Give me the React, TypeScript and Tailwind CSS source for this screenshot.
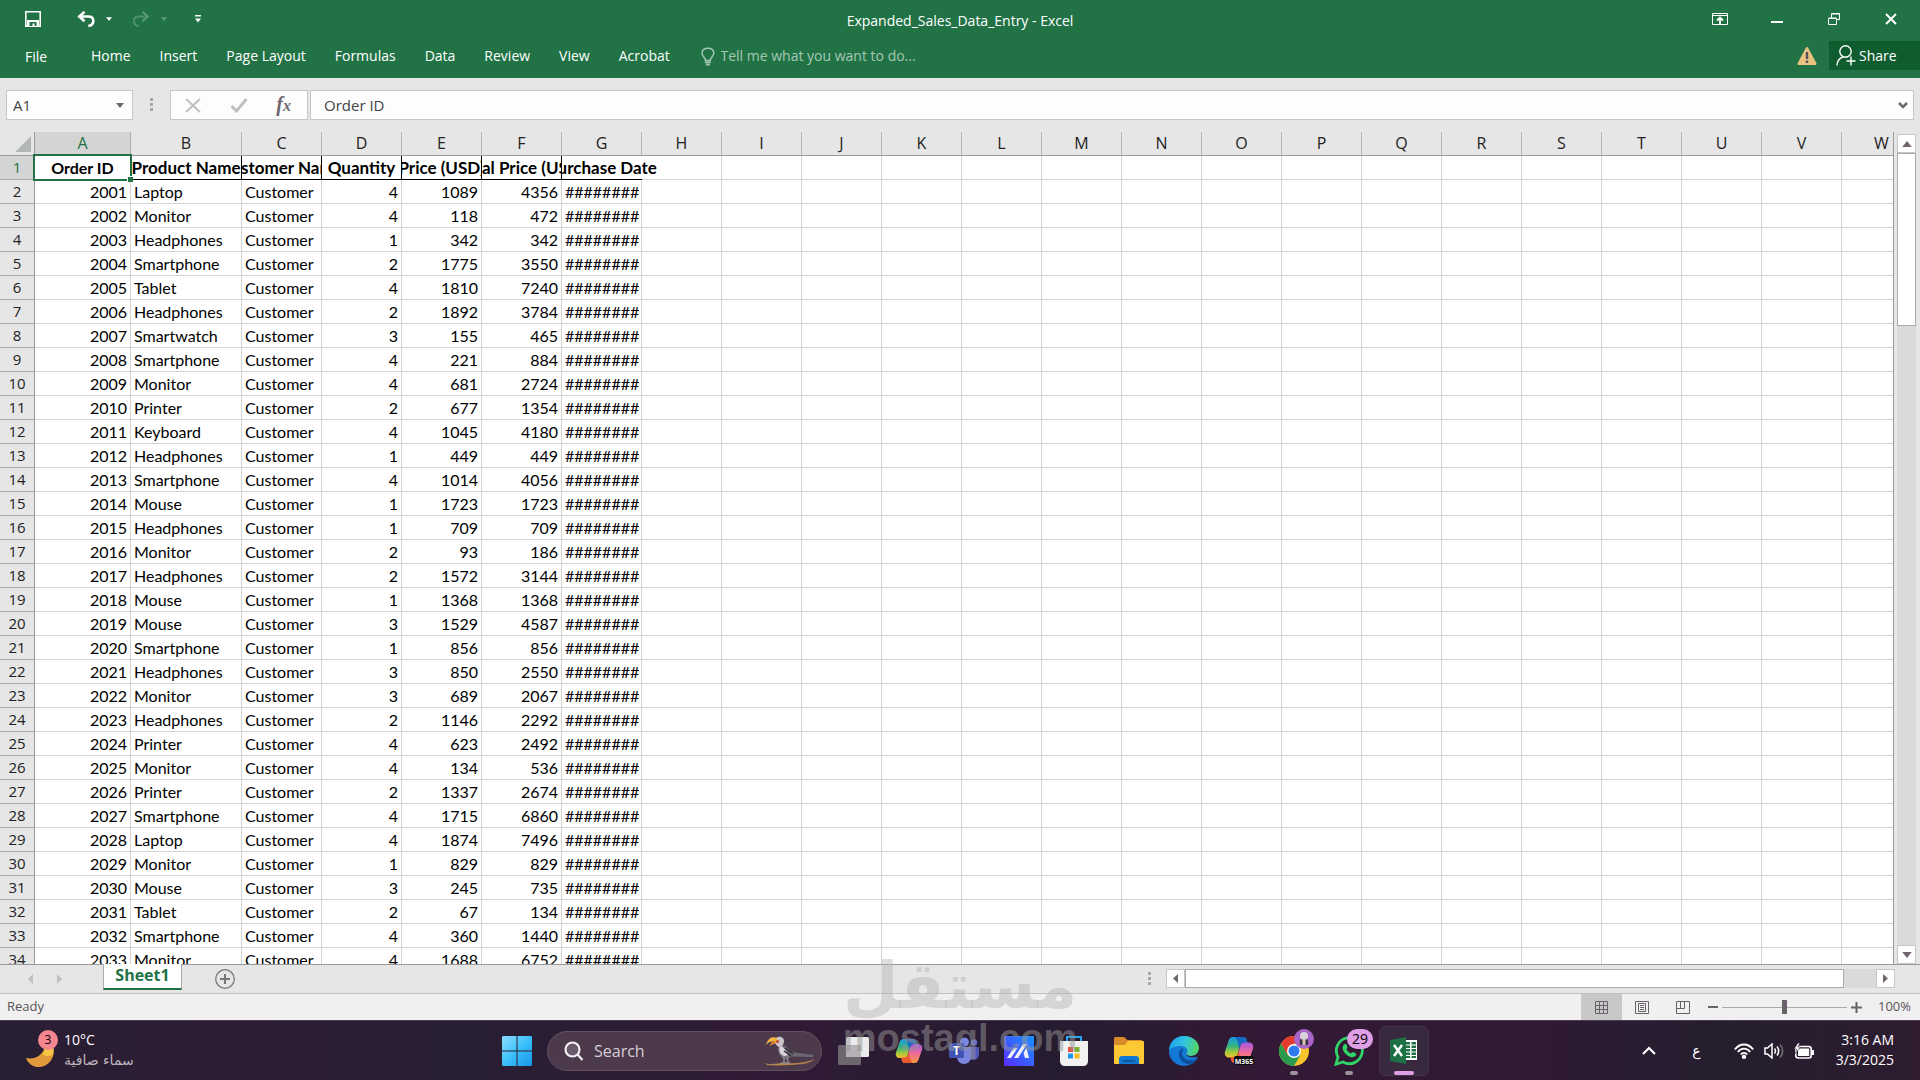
import type { ReactNode } from 'react'

const rows: [string, number, number, number][] = [
    ['Laptop', 4, 1089, 4356],
    ['Monitor', 4, 118, 472],
    ['Headphones', 1, 342, 342],
    ['Smartphone', 2, 1775, 3550],
    ['Tablet', 4, 1810, 7240],
    ['Headphones', 2, 1892, 3784],
    ['Smartwatch', 3, 155, 465],
    ['Smartphone', 4, 221, 884],
    ['Monitor', 4, 681, 2724],
    ['Printer', 2, 677, 1354],
    ['Keyboard', 4, 1045, 4180],
    ['Headphones', 1, 449, 449],
    ['Smartphone', 4, 1014, 4056],
    ['Mouse', 1, 1723, 1723],
    ['Headphones', 1, 709, 709],
    ['Monitor', 2, 93, 186],
    ['Headphones', 2, 1572, 3144],
    ['Mouse', 1, 1368, 1368],
    ['Mouse', 3, 1529, 4587],
    ['Smartphone', 1, 856, 856],
    ['Headphones', 3, 850, 2550],
    ['Monitor', 3, 689, 2067],
    ['Headphones', 2, 1146, 2292],
    ['Printer', 4, 623, 2492],
    ['Monitor', 4, 134, 536],
    ['Printer', 2, 1337, 2674],
    ['Smartphone', 4, 1715, 6860],
    ['Laptop', 4, 1874, 7496],
    ['Monitor', 1, 829, 829],
    ['Mouse', 3, 245, 735],
    ['Tablet', 2, 67, 134],
    ['Smartphone', 4, 360, 1440],
    ['Monitor', 4, 1688, 6752],
]

const letters = 'ABCDEFGHIJKLMNOPQRSTUVW'.split('')
const emptyColumns = letters.slice(7)
const headings = ['Product Name', 'Customer Name', 'Quantity', 'Price (USD)', 'Total Price (USD)']
const tabs = ['Home', 'Insert', 'Page Layout', 'Formulas', 'Data', 'Review', 'View', 'Acrobat']

function Caret({ className }: { className: string }) {
    return (
        <svg viewBox="0 0 8 5" className={className} fill="currentColor" aria-hidden="true">
            <path d="M0 0h8L4 5z" />
        </svg>
    )
}

function TitleBar() {
    return (
        <div className="grid h-[38px] grid-cols-[1fr_auto_1fr] items-center text-white">
            <div className="flex items-center pl-[25px]">
                <button aria-label="Save" className="mr-9">
                    <svg width="16" height="16" viewBox="0 0 16 16">
                        <path d="M.8.8h14.4v14.4H.8z" fill="none" stroke="#fff" strokeWidth="1.6" />
                        <path d="M2 9h12v6H2z" fill="#fff" />
                        <path d="M4.500 11h7v4h-2v-2.500h-2V15h-3z" fill="#217346" />
                    </svg>
                </button>
                <button aria-label="Undo">
                    <svg width="18" height="16" viewBox="0 0 18 16" fill="none" stroke="#fff">
                        <path d="M3 5.500h8.500c3 0 4.800 1.900 4.800 4.500 0 2.700-2 4.500-5 5" strokeWidth="2.600" />
                        <path d="M7.500.8 2.300 5.500l5.200 4.700" strokeWidth="2.600" />
                    </svg>
                </button>
                <Caret className="ml-[11px] h-1 w-1.5" />
                <button aria-label="Redo" className="ml-5 text-[#5c9a78]">
                    <svg width="18" height="16" viewBox="0 0 18 16" fill="none" stroke="currentColor">
                        <path d="M15 5.500H7C4 5.500 1.800 7.400 1.800 10c0 2.700 2 4.500 5 5" strokeWidth="2" strokeDasharray="2 .6" />
                        <path d="m10.500.8 5.200 4.700-5.200 4.700" strokeWidth="2" />
                    </svg>
                </button>
                <Caret className="ml-[11px] h-1 w-1.5 text-[#5c9a78]" />
                <button aria-label="Customize Quick Access Toolbar" className="ml-7">
                    <svg width="6" height="8" viewBox="0 0 6 8" fill="#fff">
                        <path d="M0 0h6v1.500H0zM0 3.500h6L3 7.500z" />
                    </svg>
                </button>
            </div>
            <h1 className="pt-1 text-sm">Expanded_Sales_Data_Entry - Excel</h1>
            <div className="flex justify-end pr-px">
                <button aria-label="Ribbon Display Options" className="flex w-[57px] justify-center">
                    <svg width="16" height="12" viewBox="0 0 16 12" fill="none" stroke="#fff">
                        <path d="M.5.5h15v11H.5zM.5 2.500h15" />
                        <path d="M8 11V5.500M5 7.500l3-3 3 3" strokeWidth="1.800" />
                    </svg>
                </button>
                <button aria-label="Minimize" className="flex w-[57px] items-center justify-center">
                    <svg width="12" height="12" viewBox="0 0 12 12"><path d="M0 8h12v2H0z" fill="#fff" /></svg>
                </button>
                <button aria-label="Restore Down" className="flex w-[57px] justify-center">
                    <svg width="12" height="12" viewBox="0 0 12 12" fill="none" stroke="#fff">
                        <path d="M.5 5.500h8v6h-8zM.5 5h8M3.500 5V.5h8v6h-3M3.500 1h8" />
                    </svg>
                </button>
                <button aria-label="Close" className="flex w-[57px] justify-center">
                    <svg width="12" height="12" viewBox="0 0 12 12"><path d="m1 1 10 10M11 1 1 11" stroke="#fff" strokeWidth="2" /></svg>
                </button>
            </div>
        </div>
    )
}

function Ribbon() {
    return (
        <div className="flex h-10 items-start text-sm text-white">
            <button className="mr-[29px] mt-1 h-[30px] w-12 pl-6">File</button>
            <nav className="flex">
                {tabs.map((tab) => (
                    <button key={tab} className="h-9 pl-3.5 pr-[15px]">{tab}</button>
                ))}
            </nav>
            <label className="ml-4 flex h-9 flex-1 items-center gap-1.5 text-[#a6c7b5]">
                <svg width="14" height="19" viewBox="0 0 14 19" fill="none" stroke="currentColor" strokeWidth="1.500">
                    <path d="M4.500 13.500c0-3-3.500-4-3.500-7.300C1 3 3.500 1 7 1s6 2 6 5.200c0 3.300-3.500 4.300-3.500 7.300z" />
                    <path d="M4 15.500h6M5 17.800h4" strokeWidth="1.800" />
                </svg>
                <input className="w-full bg-transparent outline-none placeholder:text-[#a6c7b5]" placeholder="Tell me what you want to do..." aria-label="Tell me what you want to do" />
            </label>
            <svg width="20" height="18" viewBox="0 0 20 18" className="mr-3 mt-[9px]">
                <path d="M10 0c.6 0 1 .4 1.300.9l8 15c.5 1-.1 2.100-1.200 2.100H1.900C.8 18 .2 16.900.7 15.900l8-15C9 .4 9.400 0 10 0z" fill="#e8c280" />
                <path d="M8.800 5h2.400v7H8.800zM8.800 13.500h2.400V16H8.800z" fill="#5d4f5c" />
            </svg>
            <button className="mt-[3px] flex h-[29px] w-[91px] items-center gap-[3px] bg-[#0f5c2f] pl-[7px]">
                <svg width="20" height="21" viewBox="0 0 20 21" fill="none" stroke="#fff" strokeWidth="1.400">
                    <circle cx="9.500" cy="6.500" r="5.700" />
                    <path d="M1 20.500c.3-4.800 2.500-7.500 6-8.500M15 11.500v9M10.500 16h9" />
                </svg>
                Share
            </button>
        </div>
    )
}

function FormulaBar() {
    return (
        <div className="flex h-[54px] items-start px-1.5 pt-3 text-[15px] text-[#444]">
            <div className="flex h-[30px] w-[127px] items-center border border-[#c6c6c6] bg-[#fdfdfd] pl-1.5 pr-2">
                <input className="w-full min-w-0 bg-transparent outline-none" aria-label="Name Box" defaultValue="A1" />
                <Caret className="h-[5px] w-2 shrink-0 text-[#6f6670]" />
            </div>
            <svg width="3" height="13" viewBox="0 0 3 13" fill="#a6a6a6" className="mx-[17px] mt-2">
                <path d="M0 0h3v3H0zM0 5h3v3H0zM0 10h3v3H0z" />
            </svg>
            <div className="flex h-[30px] w-[138px] items-center justify-between border border-[#c6c6c6] bg-[#fdfdfd] pl-3.5 pr-4">
                <button aria-label="Cancel">
                    <svg width="16" height="15" viewBox="0 0 16 15"><path d="m1 1 14 13M15 1 1 14" stroke="#c0c0c0" strokeWidth="2" /></svg>
                </button>
                <button aria-label="Enter">
                    <svg width="18" height="15" viewBox="0 0 18 15"><path d="m1.500 8 5 5L16.500 1" fill="none" stroke="#c0c0c0" strokeWidth="3" /></svg>
                </button>
                <button aria-label="Insert Function" className="font-['Liberation_Serif',serif] text-xl font-bold italic leading-6 text-[#6f6670]">
                    f<span className="text-base">x</span>
                </button>
            </div>
            <div className="ml-0.5 flex h-[30px] flex-1 items-center border border-[#c6c6c6] bg-[#fdfdfd] pl-[13px] pr-[5px]">
                <input className="w-full bg-transparent outline-none" aria-label="Formula Bar" defaultValue="Order ID" />
                <button aria-label="Expand Formula Bar">
                    <svg width="10" height="7" viewBox="0 0 10 7"><path d="m1 1 4 4 4-4" fill="none" stroke="#6f6670" strokeWidth="2.500" /></svg>
                </button>
            </div>
        </div>
    )
}

function Cell({ children, right }: { children?: ReactNode; right?: boolean }) {
    return (
        <td className={right ? 'overflow-hidden border-b border-r border-[#d4d4d4] px-[3px] text-right' : 'overflow-hidden border-b border-r border-[#d4d4d4] px-[3px]'}>
            {children}
        </td>
    )
}

function RowHeader({ n }: { n: number }) {
    return (
        <th scope="row" className={n === 1
            ? "border-b border-r border-b-[#ababab] border-r-[#999] bg-[#d3d5d4] font-['Open_Sans',sans-serif] text-[15px] font-normal text-[#217346]"
            : "border-b border-r border-b-[#ababab] border-r-[#999] bg-[#e6e6e6] font-['Open_Sans',sans-serif] text-[15px] font-normal text-[#222]"}
        >
            {n}
        </th>
    )
}

function Sheet() {
    return (
        <div className="min-w-0 flex-1 overflow-hidden border-r border-[#999]">
            <table className="w-px table-fixed border-separate border-spacing-0 whitespace-nowrap bg-white font-[Lato,sans-serif] text-base leading-[23px] text-black [&_td]:h-6 [&_td]:py-0 [&_th]:h-6 [&_th]:p-0">
                <colgroup>
                    <col className="w-[35px]" />
                    <col className="w-24" />
                    <col className="w-[111px]" />
                    {letters.slice(2).map((l) => <col key={l} className="w-20" />)}
                </colgroup>
                <thead>
                    <tr className="bg-[#e6e6e6]">
                        <td className="border-b border-r border-[#999] pr-[3px]">
                            <svg width="16" height="16" viewBox="0 0 16 16" className="ml-auto"><path d="M16 0v16H0z" fill="#b4b8b5" /></svg>
                        </td>
                        {letters.map((l) => (
                            <th key={l} scope="col" className={l === 'A'
                                ? "border-b border-r border-b-[#999] border-r-[#ababab] bg-[#d3d5d4] font-['Open_Sans',sans-serif] text-base font-normal leading-[23px] text-[#217346]"
                                : "border-b border-r border-b-[#999] border-r-[#b8b8b8] font-['Open_Sans',sans-serif] text-base font-normal leading-[23px] text-[#222]"}
                            >
                                {l}
                            </th>
                        ))}
                    </tr>
                </thead>
                <tbody>
                    <tr>
                        <RowHeader n={1} />
                        <td className="relative border-b border-r border-black text-center font-bold">
                            Order ID
                            <span className="absolute -bottom-0.5 -left-0.5 -right-0.5 -top-0.5 z-10 border-2 border-[#217346]" />
                            <span className="absolute -bottom-[3px] -right-[3px] z-20 size-[6px] border-l border-t border-white bg-[#217346]" />
                        </td>
                        {headings.map((h) => (
                            <td key={h} className="border-b border-r border-black px-0 text-[17px] font-bold leading-[23px]">
                                <div className="flex justify-center overflow-hidden"><span>{h}</span></div>
                            </td>
                        ))}
                        <td className="relative border-b border-black px-0 text-[17px] font-bold leading-[23px]">
                            <div className="flex justify-center [clip-path:inset(0_-20px_0_0)]"><span>Purchase Date</span></div>
                        </td>
                        {emptyColumns.map((c) => <Cell key={c} />)}
                    </tr>
                    {rows.map(([product, quantity, price, total], i) => (
                        <tr key={i}>
                            <RowHeader n={i + 2} />
                            <Cell right>{2001 + i}</Cell>
                            <Cell>{product}</Cell>
                            <Cell>Customer</Cell>
                            <Cell right>{quantity}</Cell>
                            <Cell right>{price}</Cell>
                            <Cell right>{total}</Cell>
                            <Cell right>########</Cell>
                            {emptyColumns.map((c) => <Cell key={c} />)}
                        </tr>
                    ))}
                </tbody>
            </table>
        </div>
    )
}

function VerticalScroll() {
    return (
        <div className="ml-[3px] mr-1 mt-0.5 flex w-[19px] flex-col bg-[#dadada] text-[#6f6670]">
            <button aria-label="Scroll up" className="flex h-[19px] items-center justify-center border border-[#c6c6c6] bg-white">
                <Caret className="h-1.5 w-2.5 rotate-180" />
            </button>
            <div className="h-[173px] border border-[#ababab] bg-white" />
            <button aria-label="Scroll down" className="mt-auto flex h-[19px] items-center justify-center border border-[#c6c6c6] bg-white">
                <Caret className="h-1.5 w-2.5" />
            </button>
        </div>
    )
}

function SheetTabs() {
    return (
        <div className="flex h-[30px] items-start border-b border-t border-b-[#c0c0c0] border-t-[#999] bg-[#e6e6e6] pr-[25px]">
            <button aria-label="Previous sheet" className="ml-7 mt-[9px] text-[#c0c0c0]">
                <svg width="5" height="10" viewBox="0 0 5 10" fill="currentColor"><path d="M5 0v10L0 5z" /></svg>
            </button>
            <button aria-label="Next sheet" className="ml-6 mt-[9px] text-[#c0c0c0]">
                <svg width="5" height="10" viewBox="0 0 5 10" fill="currentColor"><path d="M0 0v10l5-5z" /></svg>
            </button>
            <button className="-mt-px ml-[41px] h-[26px] w-[79px] border-x border-b-2 border-x-[#ababab] border-b-[#217346] bg-white pb-0.5 text-base font-bold leading-5 text-[#217346]">
                Sheet1
            </button>
            <button aria-label="New sheet" className="ml-[33px] mt-1">
                <svg width="20" height="20" viewBox="0 0 20 20" fill="none" stroke="#777">
                    <circle cx="10" cy="10" r="9.300" strokeWidth="1.300" />
                    <path d="M10 5v10M5 10h10" strokeWidth="2" />
                </svg>
            </button>
            <svg width="3" height="13" viewBox="0 0 3 13" fill="#a6a6a6" className="ml-auto mr-[15px] mt-[7px]">
                <path d="M0 0h3v3H0zM0 5h3v3H0zM0 10h3v3H0z" />
            </svg>
            <div className="mt-1 flex h-[19px] w-5/13 bg-[#dadada] text-[#6f6670]">
                <button aria-label="Scroll left" className="flex w-[19px] items-center justify-center border border-[#c6c6c6] bg-white">
                    <svg width="5" height="9" viewBox="0 0 5 9" fill="currentColor"><path d="M5 0v9L0 4.500z" /></svg>
                </button>
                <div className="mr-8 flex-1 border border-[#ababab] bg-white" />
                <button aria-label="Scroll right" className="flex w-[19px] items-center justify-center border border-[#c6c6c6] bg-white">
                    <svg width="5" height="9" viewBox="0 0 5 9" fill="currentColor"><path d="M0 0v9l5-4.500z" /></svg>
                </button>
            </div>
        </div>
    )
}

function StatusBar() {
    return (
        <div className="flex h-[26px] items-center bg-[#f0f0f0] pr-[9px] text-[13px] text-[#5a5259]">
            <span className="ml-[7px] mr-auto">Ready</span>
            <button aria-label="Normal" className="flex h-full w-[41px] items-center justify-center bg-[#c8c8c8]">
                <svg width="13" height="13" viewBox="0 0 13 13" fill="none" stroke="#6a626a"><path d="M.5.5h12v12H.5zM4.500.5v12M8.500.5v12M.5 4.500h12M.5 8.500h12" /></svg>
            </button>
            <button aria-label="Page Layout" className="flex h-full w-[41px] items-center justify-center">
                <svg width="14" height="13" viewBox="0 0 14 13" fill="none" stroke="#6a626a"><path d="M.5.5h13v12H.5zM3.500 2.500h7v8h-7zM5 4.500h4M5 6.500h4M5 8.500h4" /></svg>
            </button>
            <button aria-label="Page Break Preview" className="flex h-full w-[41px] items-center justify-center">
                <svg width="14" height="13" viewBox="0 0 14 13" fill="none" stroke="#6a626a"><path d="M.5.5h13v12H.5zM4.500.5v7M8.500.5v7M.5 7.500h8" /></svg>
            </button>
            <button aria-label="Zoom out" className="ml-1">
                <svg width="10" height="10" viewBox="0 0 10 10"><path d="M0 4h10v2H0z" fill="#6a626a" /></svg>
            </button>
            <input
                type="range"
                aria-label="Zoom"
                min={0}
                max={100}
                defaultValue={50}
                className="mx-1 h-3.5 w-[125px] appearance-none bg-[linear-gradient(#aaa,#aaa)] bg-[length:100%_1px] bg-center bg-no-repeat [&::-webkit-slider-thumb]:h-3.5 [&::-webkit-slider-thumb]:w-[5px] [&::-webkit-slider-thumb]:appearance-none [&::-webkit-slider-thumb]:bg-[#6a626a]"
            />
            <button aria-label="Zoom in">
                <svg width="11" height="11" viewBox="0 0 11 11"><path d="M0 4.500h11v2H0zM4.500 0h2v11h-2z" fill="#6a626a" /></svg>
            </button>
            <span className="ml-4">100%</span>
        </div>
    )
}

function TaskButton({ label, children }: { label: string; children: ReactNode }) {
    return (
        <button aria-label={label} className="relative flex h-full w-[55px] items-center justify-center">
            {children}
        </button>
    )
}

function RunningDot() {
    return <span className="absolute bottom-[5px] h-1 w-2 rounded-full bg-[#9b929b]" />
}

function CopilotShape({ id }: { id: string }) {
    return (
        <>
            <defs>
                <linearGradient id={`${id}-l`} x1="0" y1="0" x2="0" y2="1">
                    <stop offset="0" stopColor="#1a9be8" />
                    <stop offset=".45" stopColor="#36b37c" />
                    <stop offset=".75" stopColor="#a8c93a" />
                    <stop offset="1" stopColor="#f0c22e" />
                </linearGradient>
                <linearGradient id={`${id}-r`} x1="0" y1="0" x2="0" y2="1">
                    <stop offset="0" stopColor="#a45be0" />
                    <stop offset=".5" stopColor="#f06a9a" />
                    <stop offset="1" stopColor="#f79a3c" />
                </linearGradient>
            </defs>
            <path d="M9 2h10c2 0 3 1 3.500 2.500L23.500 8h-4c-2 0-3 1-3.500 3l-2.500 8.500c-.7 2-2 3-4 3H5c-3 0-5-2.500-4-6L4.500 6C5.300 3.500 6.500 2 9 2z" fill={`url(#${id}-l)`} />
            <path d="M10 2h9c2 0 3 1 3.500 2.500L23.500 8h-4c-2 0-3 1-3.500 3l-1 3C14 6 13 3 10 2z" fill="#1668c7" />
            <path d="M21 28H11c-2 0-3-1-3.500-2.500L6.500 22h4c2 0 3-1 3.500-3l2.500-8.500c.7-2 2-3 4-3H25c3 0 5 2.500 4 6L25.500 24c-.8 2.500-2 4-4.500 4z" fill={`url(#${id}-r)`} />
            <path d="M20 28h-9c-2 0-3-1-3.500-2.500L6.500 22h4c2 0 3-1 3.500-3l1-3c1 8 2 11 5 12z" fill="#ee5a30" />
        </>
    )
}

function Taskbar() {
    return (
        <footer className="flex h-[60px] items-center border-t border-[#4a3c4c] bg-[linear-gradient(90deg,#281f33_0%,#2e1c33_12%,#281f33_24%,#301a35_40%,#261c30_55%,#331935_66%,#2f1a33_80%,#241e2e_90%,#2f1c31_100%)] pr-0.5 text-white">
            <div className="flex flex-1 items-center pl-[26px]">
                <div className="relative h-[42px] w-[38px]">
                    <svg width="29" height="30" viewBox="0 0 29 30" className="mt-2">
                        <path d="M27 8c3 10-3 20-13 21C8 29.500 2 26 0 20c8 2 17-2 19-12 .3-1 7-1 8 0z" fill="#e09a3c" />
                        <path d="M27 8c.8 3 .8 6-.3 9-4 2-8 1-10-1 1.500-2 2-5 2.300-8 .3-1 7-1 8 0z" fill="#f6c445" />
                    </svg>
                    <span className="absolute left-3 top-0 size-5 rounded-full bg-[#f5868f] text-center text-xs leading-5 text-black">3</span>
                </div>
                <div className="pb-0.5 text-sm leading-5">
                    <div>10°C</div>
                    <div lang="ar" dir="rtl" className="font-['DejaVu_Sans',sans-serif] text-sm leading-5 text-[#bdb6be]">سماء صافية</div>
                </div>
            </div>

            <div className="flex h-full items-center">
                <TaskButton label="Start">
                    <svg width="30" height="30" viewBox="0 0 30 30">
                        <defs>
                            <linearGradient id="win" x1="0" y1="0" x2="1" y2="1">
                                <stop offset="0" stopColor="#8fdcff" />
                                <stop offset=".5" stopColor="#3cc0fb" />
                                <stop offset="1" stopColor="#1695ea" />
                            </linearGradient>
                        </defs>
                        <path d="M1 0h13.500v14.500H0V1zM15.500 0H29l1 1v13.500H15.500zM0 15.500h14.500V30H1l-1-1zM15.500 15.500H30V29l-1 1H15.500z" fill="url(#win)" />
                    </svg>
                </TaskButton>
                <label className="ml-[3px] mr-1 flex h-10 w-[275px] items-center rounded-full border border-[#61505f] bg-[#4c3a4c] pl-4 pr-1.5">
                    <svg width="20" height="20" viewBox="0 0 20 20" fill="#6b5a6b" stroke="#f2eef2" strokeWidth="2.200" className="shrink-0">
                        <circle cx="8.500" cy="8.500" r="7" />
                        <path d="m13.500 13.500 5 5.500" />
                    </svg>
                    <input className="ml-2.5 w-full min-w-0 bg-transparent text-base outline-none placeholder:text-[#d6ced6]" placeholder="Search" aria-label="Search" />
                    {/* hornbill on a branch */}
                    <svg width="50" height="30" viewBox="0 0 50 30" className="shrink-0">
                        <path d="M0 27c8 3 14-1 22 0s18 0 28-4c-7 5-12 5-18 5.500S12 30 2 29z" fill="#b98548" />
                        <path d="M14 8c4-1 8 3 12 8l23 3-1 2-22-.5c-3 4-8 4-11-1-2-4-3-8-1-11.500z" fill="#6b6770" />
                        <path d="M15 10c3 0 6 4 8 9-3 2-6 1-8-2-1-2-1-5 0-7z" fill="#d9d5da" />
                        <path d="M10 3c3-4 9-2 9 2 0 3-2 6-5 6-3-1-5-4-4-8z" fill="#c9c5cb" />
                        <path d="M12 2C7 0 3 2 1 9c3-4 6-4 11-3z" fill="#f2b63c" />
                        <path d="M10 4.500c-3 1-5 3-5 6 1-2 4-3 6-3z" fill="#e0862c" />
                        <circle cx="12.500" cy="5.500" r="1.600" fill="#c2452f" />
                        <path d="M19 20v7M22 20l1 7M16 27h9" stroke="#8f8790" strokeWidth="1.500" />
                        <path d="m20 12 8 6M19 15l7 5" stroke="#2f2b33" strokeWidth="1.500" />
                    </svg>
                </label>
                <TaskButton label="Task View">
                    <svg width="31" height="28" viewBox="0 0 31 28">
                        <rect x="0" y="8" width="23" height="20" rx="1.500" fill="#6d666d" />
                        <rect x="8" y="0" width="23" height="20" rx="1.500" fill="#ececec" />
                        <path d="M8 8h15v12H8z" fill="#b5b1b5" />
                    </svg>
                </TaskButton>
                <TaskButton label="Copilot">
                    <svg width="28" height="26" viewBox="0 1 30 28"><CopilotShape id="cop" /></svg>
                </TaskButton>
                <TaskButton label="Teams">
                    <svg width="30" height="27" viewBox="0 0 30 27">
                        <circle cx="15.500" cy="5" r="4.500" fill="#7a86e0" />
                        <circle cx="25" cy="5.500" r="3.200" fill="#5b66c9" />
                        <path d="M20 10h9c.6 0 1 .4 1 1v6c0 4-3 6-6 6s-4-1-4-3z" fill="#5058b8" />
                        <path d="M8 10h14v9c0 5-3 8-7 8s-7-3-7-8z" fill="#7b85e0" />
                        <rect x="0" y="6" width="15" height="15" rx="1.500" fill="#3f54b5" />
                        <text x="7.500" y="18" textAnchor="middle" fontSize="12" fontWeight="700" fill="#fff">T</text>
                    </svg>
                </TaskButton>
                <TaskButton label="MyASUS">
                    <svg width="30" height="30" viewBox="0 0 30 30">
                        <defs>
                            <linearGradient id="asus" x1="0" y1="1" x2="1" y2="0">
                                <stop offset="0" stopColor="#5a2cff" />
                                <stop offset="1" stopColor="#1594ff" />
                            </linearGradient>
                        </defs>
                        <path d="M0 0h30v30H0z" fill="url(#asus)" />
                        <path d="M3 22 9.500 12h4L7 22zM10 22 19 8h4L14 22zM21 22l-1.500-5 3-5.500L25 22z" fill="#eef" />
                    </svg>
                </TaskButton>
                <TaskButton label="Microsoft Store">
                    <svg width="30" height="30" viewBox="0 0 30 30">
                        <path d="M8 6V1h14v5" fill="none" stroke="#2aa5f0" strokeWidth="2" />
                        <path d="M1 5h28v20c0 3-2 5-5 5H6c-3 0-5-2-5-5z" fill="#f1f1f1" />
                        <path d="M9 11h5v5H9z" fill="#e8452c" />
                        <path d="M15.500 11h5v5h-5z" fill="#7db32b" />
                        <path d="M9 17.500h5v5H9z" fill="#1d95e6" />
                        <path d="M15.500 17.500h5v5h-5z" fill="#fbbd1a" />
                    </svg>
                </TaskButton>
                <TaskButton label="File Explorer">
                    <svg width="30" height="28" viewBox="0 0 30 28">
                        <path d="M0 1.500C0 .6.600 0 1.500 0H10l3.500 3H28v8H0z" fill="#d98b2b" />
                        <path d="M0 8h11l3-4h15c.6 0 1 .4 1 1v21c0 .6-.4 1-1 1H1c-.6 0-1-.4-1-1z" fill="#fcc935" />
                        <path d="M5 27v-5c0-2 1-3 3-3h14c2 0 3 1 3 3v5z" fill="#1378d4" />
                        <path d="M9 23h12v2H9z" fill="#0d5aa5" />
                    </svg>
                </TaskButton>
                <TaskButton label="Edge">
                    <svg width="30" height="30" viewBox="0 0 30 30">
                        <defs>
                            <linearGradient id="edge" x1="0" y1=".3" x2="1" y2=".5">
                                <stop offset="0" stopColor="#1f9fee" />
                                <stop offset=".5" stopColor="#30c5e0" />
                                <stop offset="1" stopColor="#55d35f" />
                            </linearGradient>
                        </defs>
                        <circle cx="15" cy="15" r="15" fill="#1479d6" />
                        <path d="M0 14C1 5 7 0 15 0c9 0 15 6 15 12 0 5-4 8-8 8-3 0-5-1-4.500-2.500C20 14 17 10 12 10 7 10 2 12 0 14z" fill="url(#edge)" />
                        <path d="M10 16c-1 8 5 13 12 12 3-.5 5-3 6-5-8 3-15 0-15-6 0-2 1-3.500 2-4.500-3 0-4.500 1.500-5 3.500z" fill="#0c4f9e" />
                        <path d="M17.500 17.500C16.500 20 20 22 29 21l1-4v-5c0 5-4 8-8 8-3 0-5-1-4.500-2.500z" fill="#301a35" />
                    </svg>
                </TaskButton>
                <TaskButton label="Microsoft 365">
                    <svg width="30" height="28" viewBox="0 2 30 28">
                        <CopilotShape id="m365" />
                        <rect x="10" y="21" width="20" height="9" rx="2" fill="#0c0c0c" />
                        <text x="20" y="28.500" textAnchor="middle" fontSize="7" fontWeight="700" fill="#fff">M365</text>
                    </svg>
                </TaskButton>
                <TaskButton label="Chrome">
                    <svg width="30" height="30" viewBox="0 0 30 30">
                        <circle cx="15" cy="15" r="15" fill="#fbc32c" />
                        <path d="M2 7.500A15 15 0 0 1 28 7.500H15L8.500 18.700z" fill="#e33b2e" />
                        <path d="M2 7.500A15 15 0 0 0 15 30l6.500-11.300L15 15l-6.500 3.700z" fill="#2a9a4c" />
                        <circle cx="15" cy="15" r="7" fill="#fff" />
                        <circle cx="15" cy="15" r="5.500" fill="#2f78ee" />
                    </svg>
                    <svg width="20" height="20" viewBox="0 0 20 20" className="absolute right-[7px] top-2">
                        <circle cx="10" cy="10" r="10" fill="#a965c9" />
                        <path d="M6 16c-1-5 1-8 4-8s5 3 4 8z" fill="#3a333d" />
                        <circle cx="10" cy="7" r="4" fill="#d8d3da" />
                        <path d="M8.500 11h3v5h-3z" fill="#d8c6bd" />
                    </svg>
                    <RunningDot />
                </TaskButton>
                <TaskButton label="WhatsApp">
                    <svg width="30" height="30" viewBox="0 0 30 30">
                        <path d="M2 28.200 4 21A13 13 0 1 1 9 26z" fill="none" stroke="#30d366" strokeWidth="2.800" />
                        <path d="M10 8.500c1-1 2-.8 2.500.2l1 2.300c.3.8-.8 1.600-1 2.200 1 2 2.500 3.400 4.500 4.200.7-.3 1.300-1.700 2-1.400l2.600 1.200c.9.500.8 1.500.2 2.400-1.300 2-3.800 2-6 1.100-3.300-1.300-6-4-7-7.200-.5-2 0-3.800 1.200-5z" fill="#30d366" />
                    </svg>
                    <span className="absolute left-[26px] top-2 h-5 w-[26px] rounded-full bg-[#df9fe6] text-center text-sm leading-5 text-black">29</span>
                    <RunningDot />
                </TaskButton>
                <TaskButton label="Excel">
                    <span className="flex size-[50px] items-center justify-center rounded-md border border-[#44344a] bg-[#38293f]">
                        <svg width="27" height="27" viewBox="0 0 27 27">
                            <path d="M14 3h13v20H14z" fill="#fff" />
                            <path d="M16 5h4v2.500h-4zM21.500 5H26v2.500h-4.500zM16 8.500h4V11h-4zM21.500 8.500H26V11h-4.500zM16 12h4v2.500h-4zM21.500 12H26v2.500h-4.500zM16 15.500h4V18h-4zM21.500 15.500H26V18h-4.500zM16 19h4v2h-4zM21.500 19H26v2h-4.500z" fill="#217346" />
                            <path d="M0 3 16 0v27L0 24z" fill="#1e7145" />
                            <path d="m4 8 8 11M12 8 4 19" stroke="#fff" strokeWidth="2.400" />
                        </svg>
                    </span>
                    <span className="absolute bottom-[5px] h-1 w-5 rounded-full bg-[#df9fe6]" />
                </TaskButton>
            </div>

            <div className="flex flex-1 items-center justify-end pr-6">
                <button aria-label="Show hidden icons">
                    <svg width="14" height="9" viewBox="0 0 14 9"><path d="m1 8 6-6 6 6" fill="none" stroke="#fff" strokeWidth="2.200" /></svg>
                </button>
                <span lang="ar" className="ml-9 mr-[33px] font-['DejaVu_Sans',sans-serif] text-sm">ع</span>
                <svg width="20" height="16" viewBox="0 0 20 16" fill="none" stroke="#fff" strokeWidth="1.800">
                    <path d="M.8 6.500C6-.2 14-.2 19.200 6.500M3.800 9c3.500-4.500 8.900-4.500 12.400 0M6.700 11.500c1.800-2.200 4.800-2.200 6.600 0" />
                    <circle cx="10" cy="13.800" r="1.300" fill="#fff" />
                </svg>
                <svg width="20" height="16" viewBox="0 0 20 16" fill="none" stroke="#fff" strokeWidth="1.500" className="ml-2.5">
                    <path d="M1 5h2.500L8 1v14l-4.500-4H1zM10.500 5.500c1.200 1.500 1.200 3.500 0 5M13 3.500c2.200 2.500 2.200 6.500 0 9" />
                    <path d="M16 1.500c3.500 3.500 3.500 9.500 0 13" stroke="#7d707d" />
                </svg>
                <svg width="20" height="16" viewBox="0 0 20 16" className="ml-2.5">
                    <rect x="1.800" y="3.500" width="15.400" height="11.500" rx="2.500" fill="none" stroke="#fff" strokeWidth="1.600" />
                    <path d="M4 5.500h11.200V13H4zM18 7h2v5h-2z" fill="#fff" />
                    <path d="M4 0 0 6h2.500L1.500 10.500 6.500 4H3.800L6 0z" fill="#fff" stroke="#2f1c31" strokeWidth=".6" />
                </svg>
                <div className="ml-[22px] pb-0.5 text-right text-sm leading-5">
                    <div>3:16 AM</div>
                    <div>3/3/2025</div>
                </div>
            </div>
        </footer>
    )
}

function Watermark() {
    return (
        <div className="pointer-events-none absolute inset-x-0 bottom-6 z-30 flex flex-col items-center text-[#969696]/50">
            <span lang="ar" className="font-['DejaVu_Sans',sans-serif] text-[64px] font-bold leading-[68px] text-[#b4b4b4]/45">مستقل</span>
            <span className="font-['Liberation_Sans',sans-serif] text-[38px] font-bold leading-9">mostaql.com</span>
        </div>
    )
}

export default function App() {
    return (
        <div className="relative flex h-screen flex-col overflow-hidden bg-[#e6e6e6] font-['Open_Sans',sans-serif]">
            <header className="bg-[#217346]">
                <TitleBar />
                <Ribbon />
            </header>
            <FormulaBar />
            <main className="flex min-h-0 flex-1">
                <Sheet />
                <VerticalScroll />
            </main>
            <SheetTabs />
            <StatusBar />
            <Taskbar />
            <Watermark />
        </div>
    )
}
